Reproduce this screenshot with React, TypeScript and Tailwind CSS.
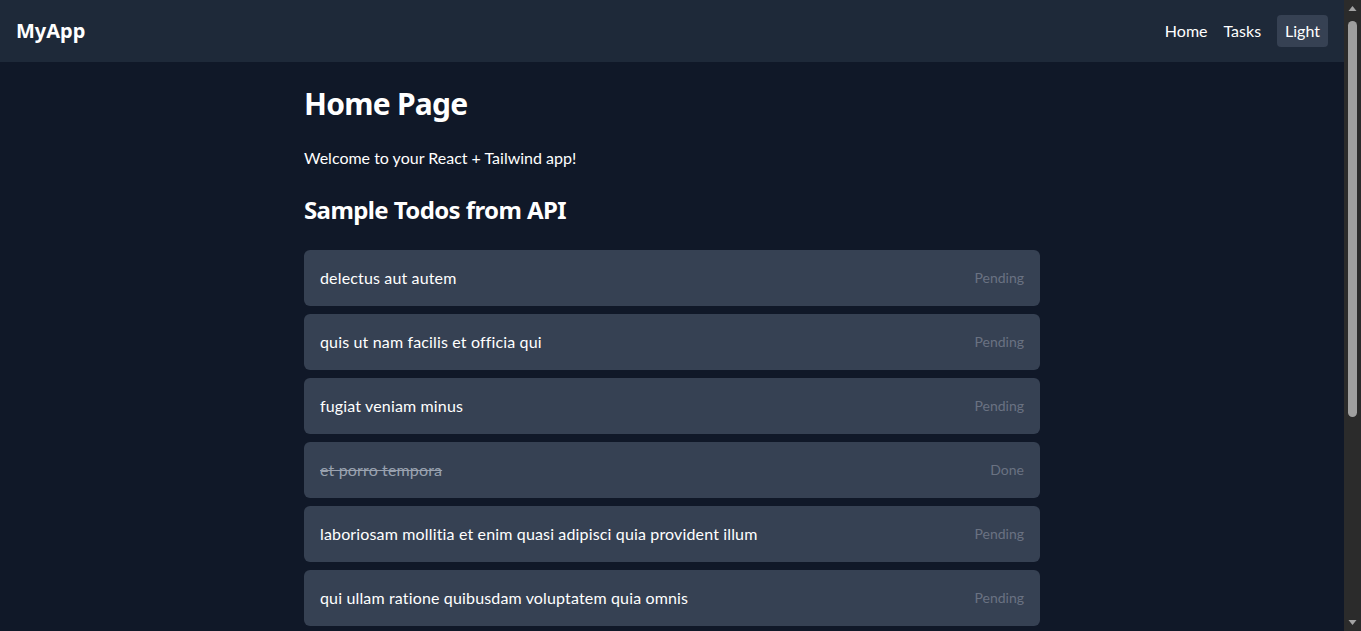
import { useState } from "react";

type Todo = { id: number; title: string; completed: boolean };

const todos: Todo[] = [
  { id: 1, title: "delectus aut autem", completed: false },
  { id: 2, title: "quis ut nam facilis et officia qui", completed: false },
  { id: 3, title: "fugiat veniam minus", completed: false },
  { id: 4, title: "et porro tempora", completed: true },
  { id: 5, title: "laboriosam mollitia et enim quasi adipisci quia provident illum", completed: false },
  { id: 6, title: "qui ullam ratione quibusdam voluptatem quia omnis", completed: false },
  { id: 7, title: "illo expedita consequatur quia in", completed: false },
  { id: 8, title: "quo adipisci enim quam ut ab", completed: true },
  { id: 9, title: "molestiae perspiciatis ipsa", completed: false },
  { id: 10, title: "illo est ratione doloremque quia maiores aut", completed: true },
];

const Navbar = () => {
  const [theme, setTheme] = useState("Light");

  return (
    <nav className="h-[62px] bg-gray-800 px-4 flex items-center justify-between text-white">
      <div className="text-xl font-bold font-['Noto_Sans',sans-serif]">MyApp</div>
      <div className="flex items-center gap-4">
        <a href="#" className="hover:underline">Home</a>
        <a href="#" className="hover:underline">Tasks</a>
        <button
          className="px-2 py-1 rounded bg-gray-700 hover:bg-gray-600"
          onClick={() => setTheme(theme === "Light" ? "Dark" : "Light")}
        >
          {theme}
        </button>
      </div>
    </nav>
  );
};

// fake window scrollbar, the screenshot shows the page scrolled to top
const Scrollbar = () => (
  <div className="w-[17px] shrink-0 bg-[#2b2b2b] flex flex-col items-center">
    <svg width="17" height="17" viewBox="0 0 17 17" className="shrink-0">
      <path d="M4.5 11 L8.5 6 L12.5 11 Z" fill="#a3a3a3" />
    </svg>
    <div className="w-[9px] h-[396px] mt-[4px] rounded-full bg-[#9f9f9f]" />
    <div className="flex-1" />
    <svg width="17" height="17" viewBox="0 0 17 17" className="shrink-0">
      <path d="M4.5 6 L8.5 11 L12.5 6 Z" fill="#a3a3a3" />
    </svg>
  </div>
);

export default function App() {
  return (
    <div className="h-screen flex overflow-hidden bg-gray-900 text-white font-['Lato','Noto_Sans',sans-serif]">
      <div className="flex-1 min-w-0 overflow-hidden">
        <Navbar />
        <main className="max-w-3xl mx-auto px-4 py-6">
          <h1 className="text-3xl font-bold tracking-tight mb-6 font-['Noto_Sans',sans-serif]">Home Page</h1>
          <p className="mb-6">Welcome to your React + Tailwind app!</p>
          <h2 className="text-2xl font-bold tracking-tight mb-6 font-['Noto_Sans',sans-serif]">Sample Todos from API</h2>
          <ul className="flex flex-col gap-2">
            {todos.map((todo) => (
              <li key={todo.id} className="bg-gray-700 rounded-md p-4 flex justify-between items-center">
                <span className={"tracking-[0.15px] " + (todo.completed ? "line-through text-gray-400" : "")}>
                  {todo.title}
                </span>
                <span className="text-sm text-gray-500">{todo.completed ? "Done" : "Pending"}</span>
              </li>
            ))}
          </ul>
        </main>
      </div>
      <Scrollbar />
    </div>
  );
}
